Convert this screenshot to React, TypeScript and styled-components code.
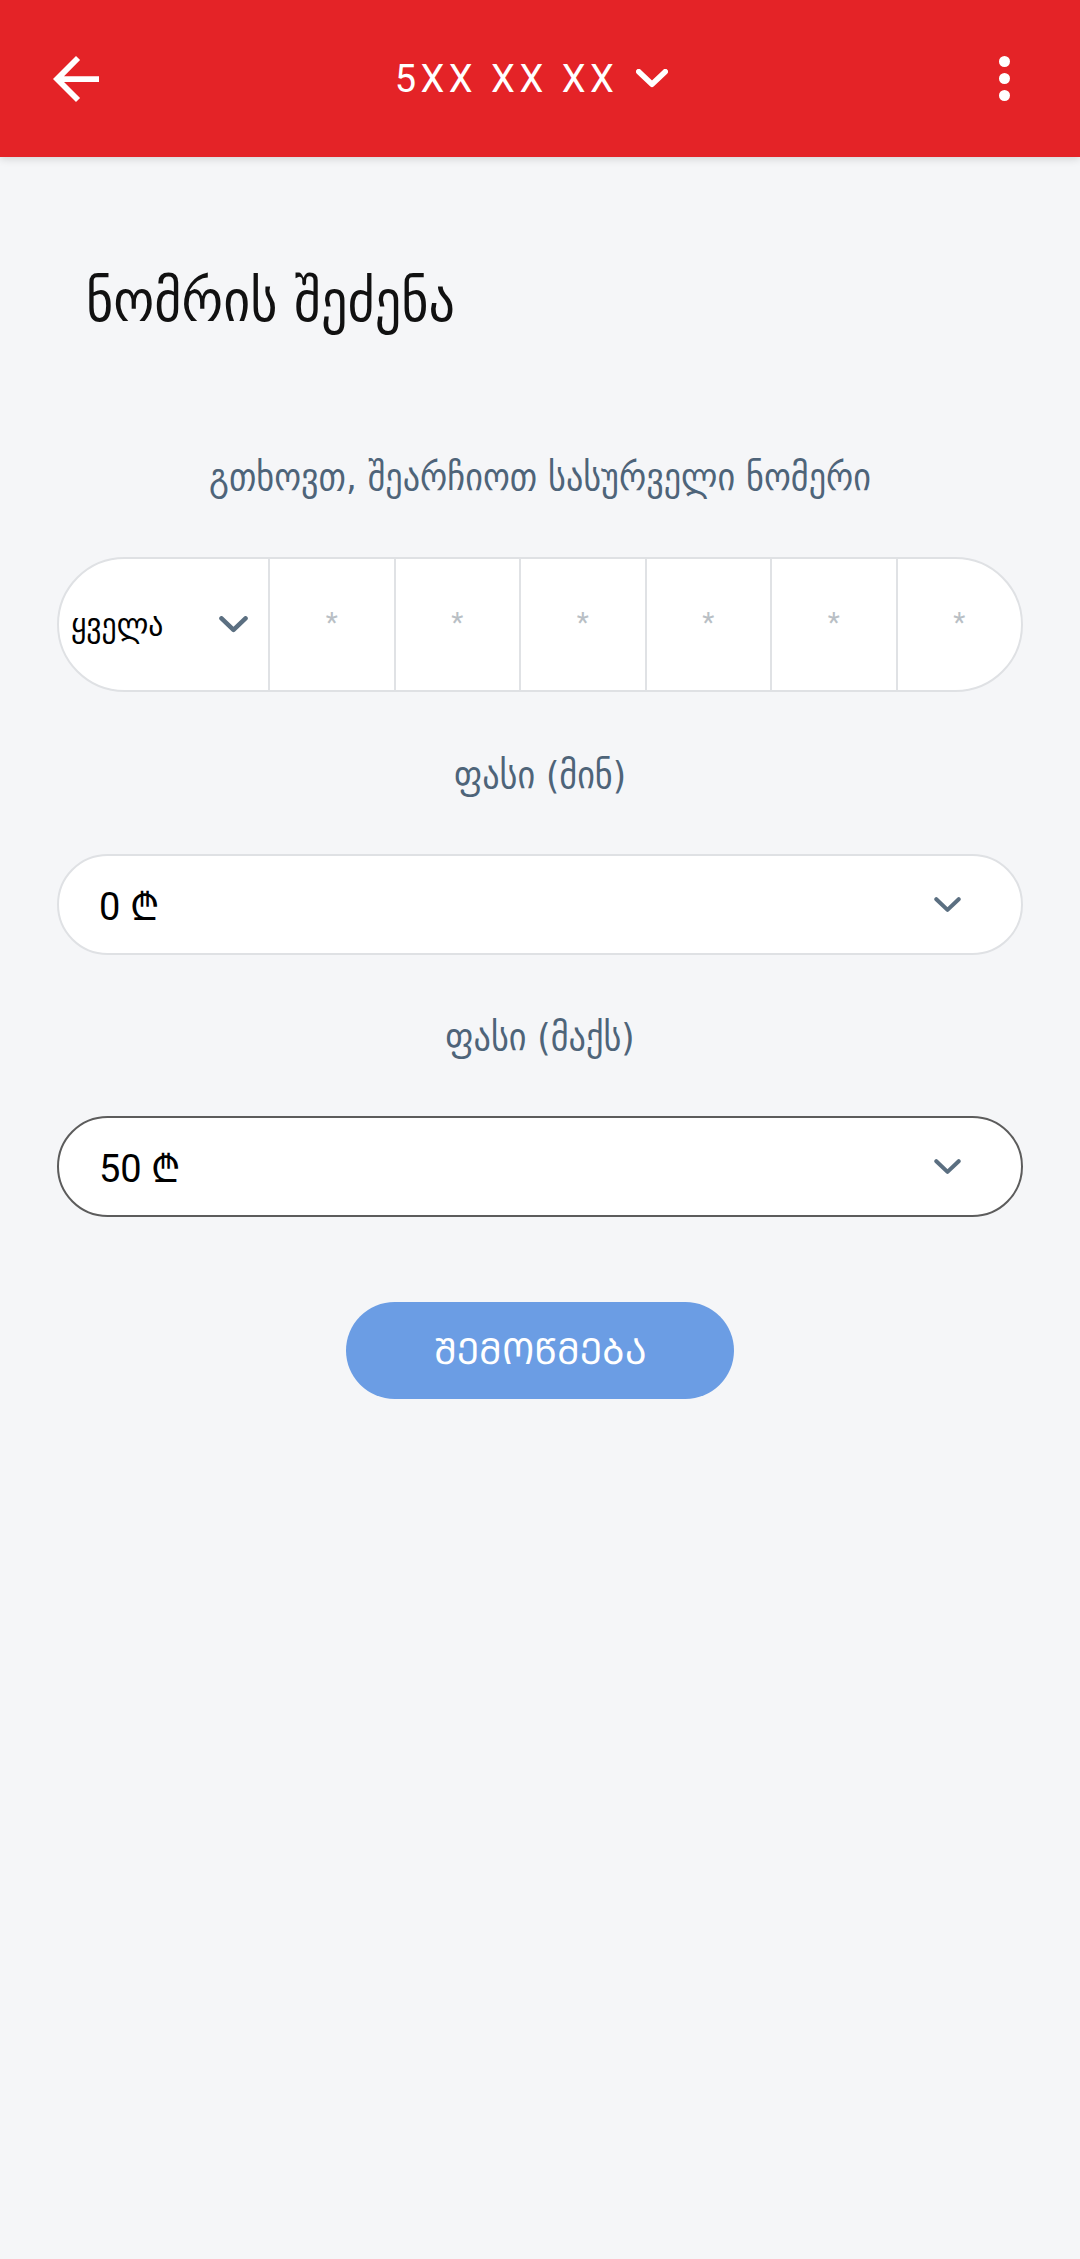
import styled, { createGlobalStyle } from "styled-components";

const GlobalStyle = createGlobalStyle`
  html, body {
    margin: 0;
    padding: 0;
    background: #f5f6f8;
  }
  body {
    font-family: Roboto, "DejaVu Sans", sans-serif;
  }
`;

const GEO = `"DejaVu Sans Condensed", "DejaVu Sans", sans-serif`;

const Page = styled.div`
  min-height: 2259px;
  background: #f5f6f8;
`;

const TopBar = styled.header`
  height: 157px;
  background: #e42327;
  display: grid;
  grid-template-columns: 1fr auto 1fr;
  align-items: center;
  padding: 0 70px 0 53px;
  box-shadow: 0 2px 8px rgba(0, 0, 0, 0.14);
  color: #fff;
`;

const IconButton = styled.div<{ $end?: boolean }>`
  display: flex;
  justify-content: ${(p) => (p.$end ? "flex-end" : "flex-start")};
  align-items: center;
`;

const Phone = styled.div`
  display: flex;
  align-items: center;
  gap: 18px;
  font-family: Roboto, sans-serif;
  font-size: 38px;
  letter-spacing: 4.5px;
`;

const Dots = styled.div`
  display: flex;
  flex-direction: column;
  gap: 6px;
  span {
    width: 11px;
    height: 11px;
    border-radius: 50%;
    background: #fff;
  }
`;

const Main = styled.main`
  padding: 0 57px;
  display: flex;
  flex-direction: column;
`;

const Title = styled.h1`
  margin: 114px 0 0 29px;
  font-family: ${GEO};
  font-weight: normal;
  font-size: 58px;
  line-height: 60px;
  color: #111;
`;

const Label = styled.p<{ $top: number }>`
  margin: ${(p) => p.$top}px 0 0;
  text-align: center;
  font-family: ${GEO};
  font-size: 38px;
  line-height: 40px;
  color: #4e6479;
`;

const NumberRow = styled.div`
  margin-top: 60px;
  height: 135px;
  box-sizing: border-box;
  border: 2px solid #dfe1e4;
  border-radius: 68px;
  background: #fff;
  overflow: hidden;
  display: grid;
  grid-template-columns: 209px repeat(6, 1fr);
`;

const PrefixCell = styled.div`
  display: flex;
  align-items: center;
  justify-content: space-between;
  padding: 0 20px 0 12px;
  font-family: ${GEO};
  font-size: 33px;
  color: #000;
`;

const DigitCell = styled.div`
  border-left: 2px solid #e0e2e5;
  display: flex;
  align-items: center;
  justify-content: center;
  font-family: Roboto, sans-serif;
  font-size: 28px;
  color: #b9bfc5;
  padding-bottom: 4px;
`;

const Select = styled.div<{ $active?: boolean }>`
  margin-top: 59px;
  height: 101px;
  box-sizing: border-box;
  border: ${(p) => (p.$active ? "2px solid #5c5c5c" : "2px solid #dfe1e4")};
  border-radius: 51px;
  background: #fff;
  display: flex;
  align-items: center;
  justify-content: space-between;
  padding: 0 60px 0 40px;
  font-family: Roboto, "DejaVu Sans", sans-serif;
  font-size: 38px;
  color: #000;
`;

const Submit = styled.button`
  margin: 85px auto 0;
  width: 388px;
  height: 97px;
  border: none;
  border-radius: 49px;
  background: #6b9de4;
  color: #fff;
  font-family: ${GEO};
  font-size: 36px;
  padding: 0;
`;

function Chevron({ size, color, stroke }: { size: number; color: string; stroke: number }) {
  return (
    <svg width={size} height={size * 0.58} viewBox="0 0 24 14" fill="none">
      <polyline
        points="2,2 12,11.5 22,2"
        stroke={color}
        strokeWidth={stroke}
        strokeLinecap="round"
        strokeLinejoin="round"
      />
    </svg>
  );
}

export default function App() {
  return (
    <Page>
      <GlobalStyle />
      <TopBar>
        <IconButton>
          <svg width="46" height="46" viewBox="4 4 16 16" fill="#fff">
            <path d="M20 11H7.83l5.59-5.59L12 4l-8 8 8 8 1.41-1.41L7.83 13H20v-2z" />
          </svg>
        </IconButton>
        <Phone>
          <span>5XX XX XX</span>
          <Chevron size={32} color="#fff" stroke={4.2} />
        </Phone>
        <IconButton $end>
          <Dots>
            <span />
            <span />
            <span />
          </Dots>
        </IconButton>
      </TopBar>
      <Main>
        <Title>ნომრის შეძენა</Title>
        <Label $top={126}>გთხოვთ, შეარჩიოთ სასურველი ნომერი</Label>
        <NumberRow>
          <PrefixCell>
            <span>ყველა</span>
            <Chevron size={29} color="#5b6f81" stroke={3.8} />
          </PrefixCell>
          {[0, 1, 2, 3, 4, 5].map((i) => (
            <DigitCell key={i}>*</DigitCell>
          ))}
        </NumberRow>
        <Label $top={63}>ფასი (მინ)</Label>
        <Select>
          <span>0 ₾</span>
          <Chevron size={27} color="#5b6f81" stroke={3.6} />
        </Select>
        <Label $top={62}>ფასი (მაქს)</Label>
        <Select $active>
          <span>50 ₾</span>
          <Chevron size={27} color="#5b6f81" stroke={3.6} />
        </Select>
        <Submit>ᲨᲔᲛᲝᲬᲛᲔᲑᲐ</Submit>
      </Main>
    </Page>
  );
}
